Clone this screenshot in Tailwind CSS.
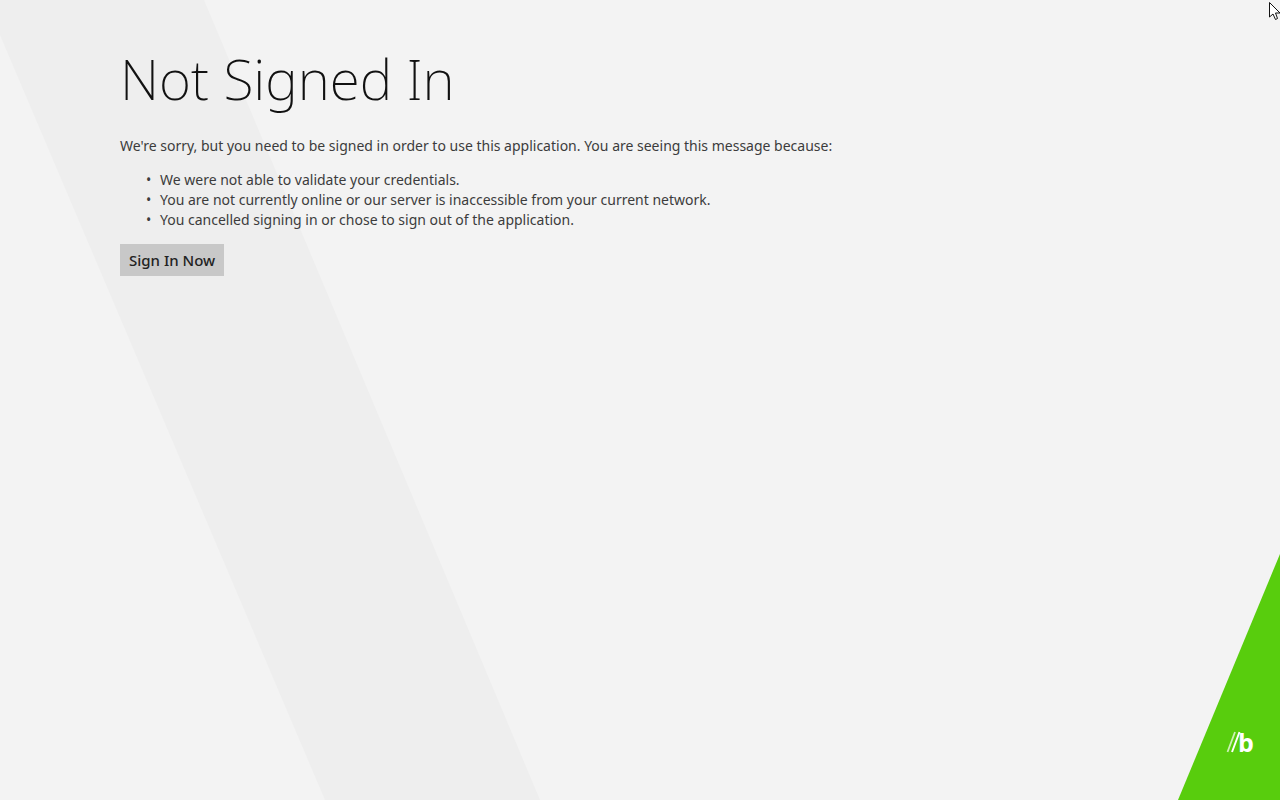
<!DOCTYPE html>
<html lang="en">
<head>
    <meta charset="UTF-8">
    <meta name="viewport" content="width=device-width, initial-scale=1.0">
    <title>Not Signed In</title>
    <script src="https://cdn.jsdelivr.net/npm/@tailwindcss/browser@4"></script>
</head>
<body class="relative min-h-screen overflow-x-hidden bg-[#f3f3f3] font-['Noto_Sans','Open_Sans',sans-serif] text-[#3c3c3c]">

    <!-- Grey band behind the content -->
    <svg class="absolute left-0 top-0 h-full" viewBox="0 0 540 800" preserveAspectRatio="xMinYMin slice" aria-hidden="true">
        <path d="M0 0H204L540 800H325L0 35Z" fill="#eeeeee"/>
    </svg>

    <!-- Green corner with the logo -->
    <svg class="absolute bottom-0 right-0 w-[102px]" viewBox="0 0 102 246" aria-hidden="true">
        <path d="M102 0V246H0Z" fill="#58cd0d"/>
        <path d="M49.500 198L57 178" stroke="#ffffff" stroke-opacity="0.7" stroke-width="1.8"/>
        <path d="M54 198L61.500 178" stroke="#ffffff" stroke-width="2"/>
        <text x="60" y="198" fill="#ffffff" class="font-['Open_Sans',sans-serif] text-[25px] font-bold">b</text>
    </svg>

    <main class="relative px-[120px] pt-[49px]">
        <h1 class="text-[55px] leading-[60px] font-extralight text-[#111111]">Not Signed In</h1>
        <p class="mt-[27px] text-[14px] leading-5">We're sorry, but you need to be signed in order to use this application. You are seeing this message because:</p>
        <ul class="mt-[14px] pl-10 text-[14px] leading-5">
            <li class="relative before:absolute before:-left-[14px] before:content-['•']">We were not able to validate your credentials.</li>
            <li class="relative before:absolute before:-left-[14px] before:content-['•']">You are not currently online or our server is inaccessible from your current network.</li>
            <li class="relative before:absolute before:-left-[14px] before:content-['•']">You cancelled signing in or chose to sign out of the application.</li>
        </ul>
        <button type="button" class="mt-[14px] h-8 bg-[#c8c8c8] px-[9px] text-[15px] leading-5 font-medium text-[#222222] hover:bg-[#d4d4d4]">Sign In Now</button>
    </main>

    <!-- Mouse pointer -->
    <svg class="absolute right-0 top-[2px] h-[18px] w-[11px]" viewBox="0 0 11 18" aria-hidden="true">
        <path d="M0.500 0.500V15L4 12L6.500 17.500L8.500 16.500L6.500 11H11Z" fill="#ffffff" stroke="#111111" stroke-width="1"/>
    </svg>

</body>
</html>
